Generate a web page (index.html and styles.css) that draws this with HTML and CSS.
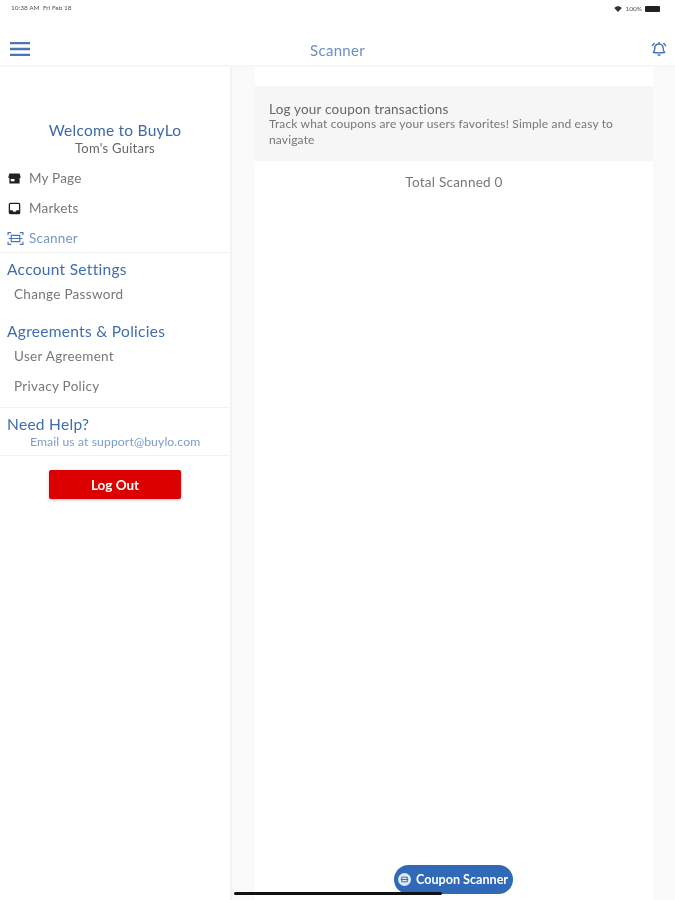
FILE: index.html
```html
<!DOCTYPE html>
<html lang="en">
<head>
<meta charset="utf-8">
<title>Scanner</title>
<link rel="stylesheet" href="styles.css">
</head>
<body>
<div class="app">
  <div class="status">
    <span class="status-time">10:38 AM&nbsp;&nbsp;Fri Feb 18</span>
    <span class="status-right">
      <svg class="wifi" viewBox="0 0 10 8"><path d="M0 2.5C3-.5 7-.5 10 2.5L5 8z" fill="#333"/></svg>
      <span>100%</span>
      <span class="battery"></span>
    </span>
  </div>
  <header class="header">
    <svg class="menu" viewBox="0 0 20 14"><path d="M0 1.2h20M0 7h20M0 12.8h20" stroke="#4a76b8" stroke-width="2.3" fill="none"/></svg>
    <div class="header-title">Scanner</div>
    <svg class="bell" viewBox="0 0 16 16" fill="none" stroke="#4a76b8" stroke-width="1.4"><path d="M8 3c-2.800 0-4.200 2-4.200 4.400 0 1.800-.6 3-1.300 3.900l1.400.4h8.200l1.400-.4c-.7-.9-1.300-2.100-1.300-3.900C12.200 5 10.800 3 8 3zM6.500 14h3M1 5l2.600-3M15 5l-2.600-3M8 1v2"/></svg>
  </header>
  <div class="body">
    <aside class="side">
      <div class="welcome">
        <div class="welcome-title">Welcome to BuyLo</div>
        <div class="welcome-sub">Tom's Guitars</div>
      </div>
      <nav class="nav">
        <div class="nav-item">
          <svg class="nav-icon" viewBox="0 0 14 14"><path d="M1.5 1.5h11l1 3.5v1.5h-1v6H1.500v-6h-1V5z" fill="#222"/><path d="M3 7.500h4v2.500H3z" fill="#fff"/></svg>
          <span>My Page</span>
        </div>
        <div class="nav-item">
          <svg class="nav-icon" viewBox="0 0 14 14"><path d="M2.500 1.500h9a1 1 0 0 1 1 1v9a1 1 0 0 1-1 1h-9a1 1 0 0 1-1-1v-9a1 1 0 0 1 1-1z" fill="none" stroke="#222" stroke-width="1.400"/><path d="M2 9h2.800l1 1.500h2.400l1-1.500H12v3.500H2z" fill="#222"/></svg>
          <span>Markets</span>
        </div>
        <div class="nav-item nav-active">
          <svg class="nav-icon nav-icon-wide" viewBox="0 0 16 14" fill="none" stroke="#4a76b8" stroke-width="1.100"><path d="M1 4V1.500h3M12 1.500h3V4M15 10v2.500h-3M4 12.500H1V10M4 4h8v6H4zM1.500 7h13"/></svg>
          <span>Scanner</span>
        </div>
      </nav>
      <section class="group group-account">
        <h2 class="group-title">Account Settings</h2>
        <div class="group-item">Change Password</div>
      </section>
      <section class="group group-policies">
        <h2 class="group-title">Agreements &amp; Policies</h2>
        <div class="group-item">User Agreement</div>
        <div class="group-item">Privacy Policy</div>
      </section>
      <section class="help">
        <h2 class="group-title">Need Help?</h2>
        <div class="help-mail">Email us at support@buylo.com</div>
      </section>
      <div class="logout-row"><button class="logout">Log Out</button></div>
    </aside>
    <main class="main">
      <div class="content">
        <div class="banner">
          <div class="banner-title">Log your coupon transactions</div>
          <div class="banner-text">Track what coupons are your users favorites! Simple and easy to navigate</div>
        </div>
        <div class="total">Total Scanned 0</div>
      </div>
    </main>
  </div>
  <button class="fab">
    <svg class="fab-icon" viewBox="0 0 14 14"><circle cx="7" cy="7" r="7" fill="#dfe8f5"/><path d="M4 4.500h6v5H4zM3 7h8" fill="none" stroke="#2f66b5" stroke-width="1"/></svg>
    <span>Coupon Scanner</span>
  </button>
  <div class="home-bar"></div>
</div>
</body>
</html>
```
FILE: styles.css
```css
* { box-sizing: border-box; }
html, body { margin: 0; padding: 0; }
body { font-family: "Lato", "Open Sans", sans-serif; color: #444; background: #fff; }
.app { position: relative; width: 675px; height: 900px; overflow: hidden; display: flex; flex-direction: column; filter: blur(0.45px); }
.status { height: 26px; padding: 4px 15px 0 11px; display: flex; justify-content: space-between; font-size: 6.5px; color: #555; }
.status-right { display: flex; align-items: flex-start; gap: 3px; margin-top: 1px; }
.wifi { width: 8px; height: 6px; margin-top: 1px; }
.battery { width: 15px; height: 6px; margin-top: 1px; background: #222; border-radius: 1px; }
.header { height: 41px; flex: none; display: flex; align-items: center; justify-content: space-between; padding: 7px 8px 0 10px; border-bottom: 2px solid #f6f6f6; position: relative; }
.menu { width: 20px; height: 14px; }
.header-title { position: absolute; left: 0; right: 0; top: 14px; text-align: center; font-size: 15px; line-height: 20px; color: #6a8ec6; letter-spacing: 0.3px; }
.bell { width: 16px; height: 16px; }
.body { flex: 1; display: flex; min-height: 0; }
.side { width: 232px; flex: none; border-right: 2px solid #f3f3f3; }
.welcome { padding-top: 53px; text-align: center; }
.welcome-title { font-size: 15.500px; line-height: 21px; color: #3c69ae; letter-spacing: 0.25px; }
.welcome-sub { font-size: 13px; line-height: 15px; color: #666; letter-spacing: 0.25px; }
.nav { padding-top: 7px; border-bottom: 1px solid #f2f2f2; height: 97px; }
.nav-item { height: 30px; display: flex; align-items: center; padding-left: 8px; gap: 8px; font-size: 13.500px; color: #777; letter-spacing: 0.2px; }
.nav-icon { width: 13px; height: 13px; flex: none; }
.nav-icon-wide { width: 17px; height: 15px; margin-left: -1px; margin-right: -3px; }
.nav-active { color: #7396cc; }
.group { padding-left: 7px; }
.group-account { padding-top: 7px; height: 62px; }
.group-policies { height: 93px; border-bottom: 1px solid #f2f2f2; padding-top: 7px; }
.group-title { margin: 0; font-weight: 400; font-size: 15.500px; line-height: 19px; color: #3f6db2; letter-spacing: 0.3px; }
.group-item { height: 30px; padding-left: 7px; display: flex; align-items: center; font-size: 13.500px; color: #777; letter-spacing: 0.3px; }
.help { padding: 7px 0 5px 7px; border-bottom: 1px solid #f2f2f2; height: 48px; }
.help-mail { padding-left: 23px; margin-top: 1px; font-size: 12.200px; line-height: 14px; color: #7b9cce; letter-spacing: 0.1px; }
.logout-row { padding-top: 14px; display: flex; justify-content: center; }
.logout { width: 132px; height: 29px; border: 0; border-radius: 2px; background: #dc0000; color: #fff; font: 700 13.500px "Lato", sans-serif; box-shadow: 0 1px 3px rgba(0,0,0,.25); }
.main { flex: 1; background: #fafafa; padding: 0 22px 0 23px; }
.content { height: 100%; background: #fff; padding-top: 19px; }
.banner { height: 75px; background: #f6f6f6; padding: 15px 14px 0 14px; }
.banner-title { font-size: 13.500px; line-height: 16px; color: #666; letter-spacing: 0.2px; }
.banner-text { font-size: 12px; line-height: 15.500px; color: #777; letter-spacing: 0.15px; margin-top: -1px; }
.total { margin-top: 12px; text-align: center; font-size: 13.500px; line-height: 18px; color: #777; letter-spacing: 0.25px; }
.fab { position: absolute; left: 394px; top: 865px; width: 119px; height: 29px; border: 0; border-radius: 15px; background: #2f69b7; color: #fff; display: flex; align-items: center; gap: 5px; padding: 0 0 0 3px; font: 700 12.600px "Lato", sans-serif; white-space: nowrap; }
.fab-icon { width: 13px; height: 13px; margin-left: 1px; flex: none; }
.home-bar { position: absolute; left: 234px; top: 892px; width: 208px; height: 3px; background: #111; border-radius: 2px; }
```
